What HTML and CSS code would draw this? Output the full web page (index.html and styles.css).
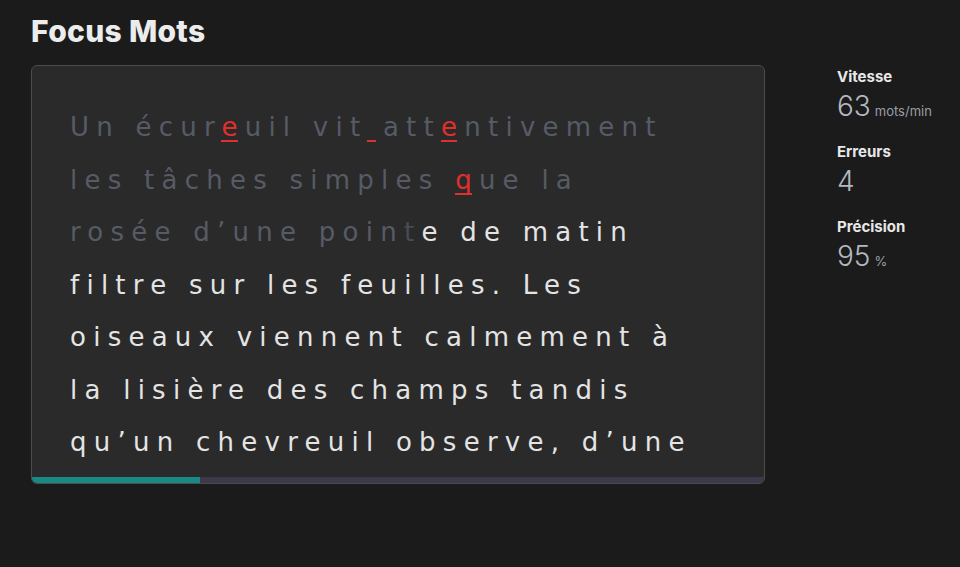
FILE: index.html
```html
<!DOCTYPE html>
<html lang="fr">
<head>
<meta charset="utf-8">
<title>Focus Mots</title>
<link rel="stylesheet" href="styles.css">
</head>
<body>
<div class="page">
  <h1 class="title">Focus Mots</h1>
  <div class="main">
    <section class="card">
      <div class="text">
        <div class="line"><span class="done">Un écur</span><span class="err">e</span><span class="done">uil vit</span><span class="err sp"> </span><span class="done">att</span><span class="err">e</span><span class="done">ntivement</span></div>
        <div class="line"><span class="done">les tâches simples </span><span class="err">q</span><span class="done">ue la</span></div>
        <div class="line"><span class="done">rosée d’une poin</span><span class="cursor">t</span><span class="todo">e de matin</span></div>
        <div class="line todo">filtre sur les feuilles. Les</div>
        <div class="line todo">oiseaux viennent calmement à</div>
        <div class="line todo">la lisière des champs tandis</div>
        <div class="line todo">qu’un chevreuil observe, d’une</div>
      </div>
      <div class="progress"><div class="fill" style="width:23%"></div></div>
    </section>
    <aside class="stats">
      <div class="stat">
        <div class="label">Vitesse</div>
        <div class="value">63<span class="unit">mots/min</span></div>
      </div>
      <div class="stat">
        <div class="label">Erreurs</div>
        <div class="value">4</div>
      </div>
      <div class="stat">
        <div class="label">Précision</div>
        <div class="value">95<span class="unit">%</span></div>
      </div>
    </aside>
  </div>
</div>
</body>
</html>
```

FILE: styles.css
```css
html, body {
  margin: 0;
  padding: 0;
  background: #1b1b1b;
  height: 100%;
}
body {
  font-family: "Inter", "Open Sans", sans-serif;
  color: #e6e6e6;
}
.page {
  padding: 12px 0 0 31px;
}
.title {
  margin: 0;
  font-family: "Inter", sans-serif;
  font-weight: 800;
  font-size: 30px;
  line-height: 38px;
  letter-spacing: 0.3px;
  color: #ececec;
}
.main {
  display: flex;
  align-items: flex-start;
  gap: 72px;
  margin-top: 15px;
}
.card {
  width: 732px;
  background: #2a2a2a;
  border: 1px solid #4c4c4c;
  border-radius: 6px;
  overflow: hidden;
  display: flex;
  flex-direction: column;
}
.text {
  padding: 35px 20px 8px 38px;
  font-family: "DejaVu Sans", sans-serif;
  font-size: 26px;
  line-height: 52.5px;
  letter-spacing: 7.25px;
}
.line {
  height: 52.5px;
  white-space: pre;
}
.done { color: #565b66; }
.cursor { color: #474b54; }
.todo { color: #e4e4e4; }
.err {
  color: #e0302e;
  position: relative;
}
.err::after {
  content: "";
  position: absolute;
  left: 0;
  right: 7px;
  bottom: 0px;
  height: 2px;
  background: #e0302e;
}
.progress {
  height: 6px;
  background: #3a3a4c;
}
.fill {
  height: 100%;
  background: #178a86;
}
.stats {
  display: flex;
  flex-direction: column;
  gap: 17px;
  padding-top: 2px;
}
.label {
  font-family: "Inter", sans-serif;
  font-weight: 700;
  font-size: 15px;
  line-height: 20px;
  color: #e8e8e8;
}
.value {
  font-family: "Inter", sans-serif;
  font-weight: 300;
  font-size: 28px;
  line-height: 38px;
  color: #b4b8c0;
}
.unit {
  font-size: 13px;
  line-height: 1;
  font-weight: 400;
  margin-left: 4px;
  color: #9a9ea6;
}
```
